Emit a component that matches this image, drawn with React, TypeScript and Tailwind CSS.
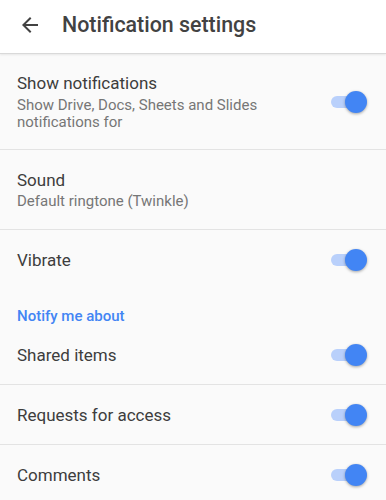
import React from "react";

function Toggle() {
  return (
    <div className="relative w-[36px] h-[22px] shrink-0">
      <div className="absolute left-0 top-[5px] w-[32px] h-[12px] rounded-full bg-[#b9d0fb]" />
      <div className="absolute right-0 top-0 w-[22px] h-[22px] rounded-full bg-[#4285f4] shadow-[0_1px_3px_rgba(0,0,0,0.35)]" />
    </div>
  );
}

function ToggleRow({ label, divider = true }: { label: string; divider?: boolean }) {
  return (
    <div
      className={
        "flex items-center justify-between h-[60px] pl-[17px] pr-[19px] " +
        (divider ? "border-b border-[#e3e3e3]" : "")
      }
    >
      <span className="text-[17px] leading-5 text-[#3d3d3d]">{label}</span>
      <Toggle />
    </div>
  );
}

export default function App() {
  return (
    <div
      className="w-[386px] h-[500px] overflow-hidden bg-[#fafafa]"
      style={{ fontFamily: "Roboto, 'Noto Sans', sans-serif" }}
    >
      <header className="h-[54px] bg-white flex items-center border-b border-[#d9d9d9] shadow-[0_1px_2px_rgba(0,0,0,0.08)]">
        <svg width="24" height="24" viewBox="0 0 24 24" className="ml-[18px] mt-[-4px] shrink-0" fill="#424242">
          <path d="M20 11H7.83l5.59-5.59L12 4l-8 8 8 8 1.41-1.41L7.83 13H20v-2z" />
        </svg>
        <h1 className="ml-[20px] mt-[-4px] text-[21.4px] font-medium text-[#424242] leading-7">
          Notification settings
        </h1>
      </header>

      <div className="flex items-center justify-between h-[96px] pl-[17px] pr-[19px] border-b border-[#e3e3e3]">
        <div className="w-[280px] mt-[1px]">
          <div className="text-[17px] leading-5 text-[#3d3d3d]">Show notifications</div>
          <div className="mt-[4px] text-[15px] leading-[17px] text-[#767676]">
            Show Drive, Docs, Sheets and Slides notifications for
          </div>
        </div>
        <Toggle />
      </div>

      <div className="h-[80px] pl-[17px] pr-[19px] pt-[20px] border-b border-[#e3e3e3]">
        <div className="text-[17px] leading-5 text-[#3d3d3d]">Sound</div>
        <div className="mt-[3px] text-[15px] leading-[17px] text-[#767676]">Default ringtone (Twinkle)</div>
      </div>

      <ToggleRow label="Vibrate" divider={false} />

      <div className="h-[35px] pt-[14px] pl-[17px]">
        <span className="text-[15px] leading-5 font-medium text-[#4285f4]">Notify me about</span>
      </div>

      <ToggleRow label="Shared items" />
      <ToggleRow label="Requests for access" />
      <ToggleRow label="Comments" />
    </div>
  );
}
